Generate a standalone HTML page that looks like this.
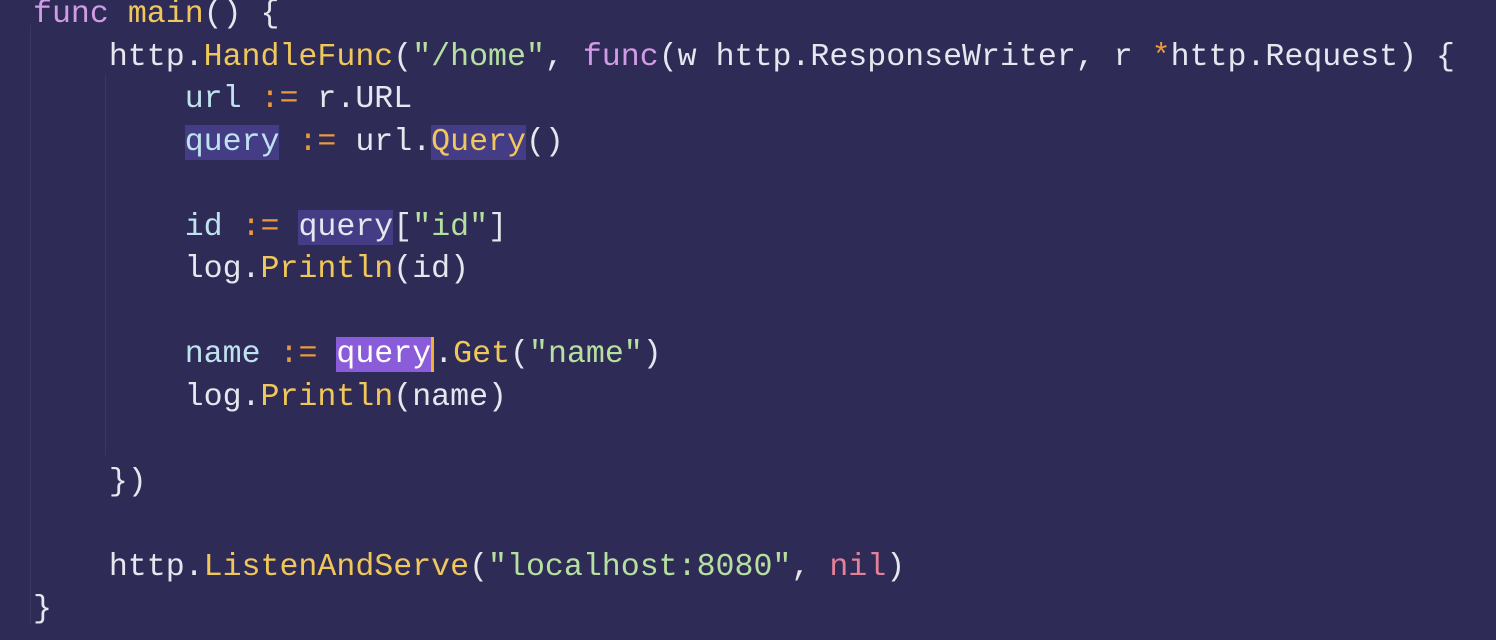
<!DOCTYPE html>
<html><head><meta charset="utf-8"><style>
html,body{margin:0;padding:0;width:1496px;height:640px;overflow:hidden;background:#2e2b56;}
pre{position:absolute;left:33px;top:-6px;margin:0;font-family:"Liberation Mono",monospace;font-size:31.6px;line-height:42.5px;color:#e6e6ee;}
.k{color:#d29be6}.f{color:#f0c75a}.s{color:#b5e0a0}.v{color:#bfe3ee}.o{color:#e89a3c}.n{color:#e3809a}
.h{background:#453c86}.sel{background:#8b5cd9;color:#fff}
.cur{border-right:3px solid #f0b030}
.g{position:absolute;width:1px;background:#3b3866}
</style></head><body>
<div class="g" style="left:30px;top:25px;height:600px"></div>
<div class="g" style="left:105px;top:75px;height:380px"></div>
<pre><span class="k">func</span> <span class="f">main</span>() {
    http.<span class="f">HandleFunc</span>(<span class="s">"/home"</span>, <span class="k">func</span>(w http.ResponseWriter, r <span class="o">*</span>http.Request) {
        <span class="v">url</span> <span class="o">:=</span> r.URL
        <span class="v h">query</span> <span class="o">:=</span> url.<span class="f h">Query</span>()

        <span class="v">id</span> <span class="o">:=</span> <span class="h">query</span>[<span class="s">"id"</span>]
        log.<span class="f">Println</span>(id)

        <span class="v">name</span> <span class="o">:=</span> <span class="sel cur">query</span>.<span class="f">Get</span>(<span class="s">"name"</span>)
        log.<span class="f">Println</span>(name)

    })

    http.<span class="f">ListenAndServe</span>(<span class="s">"localhost:8080"</span>, <span class="n">nil</span>)
}</pre>
</body></html>
